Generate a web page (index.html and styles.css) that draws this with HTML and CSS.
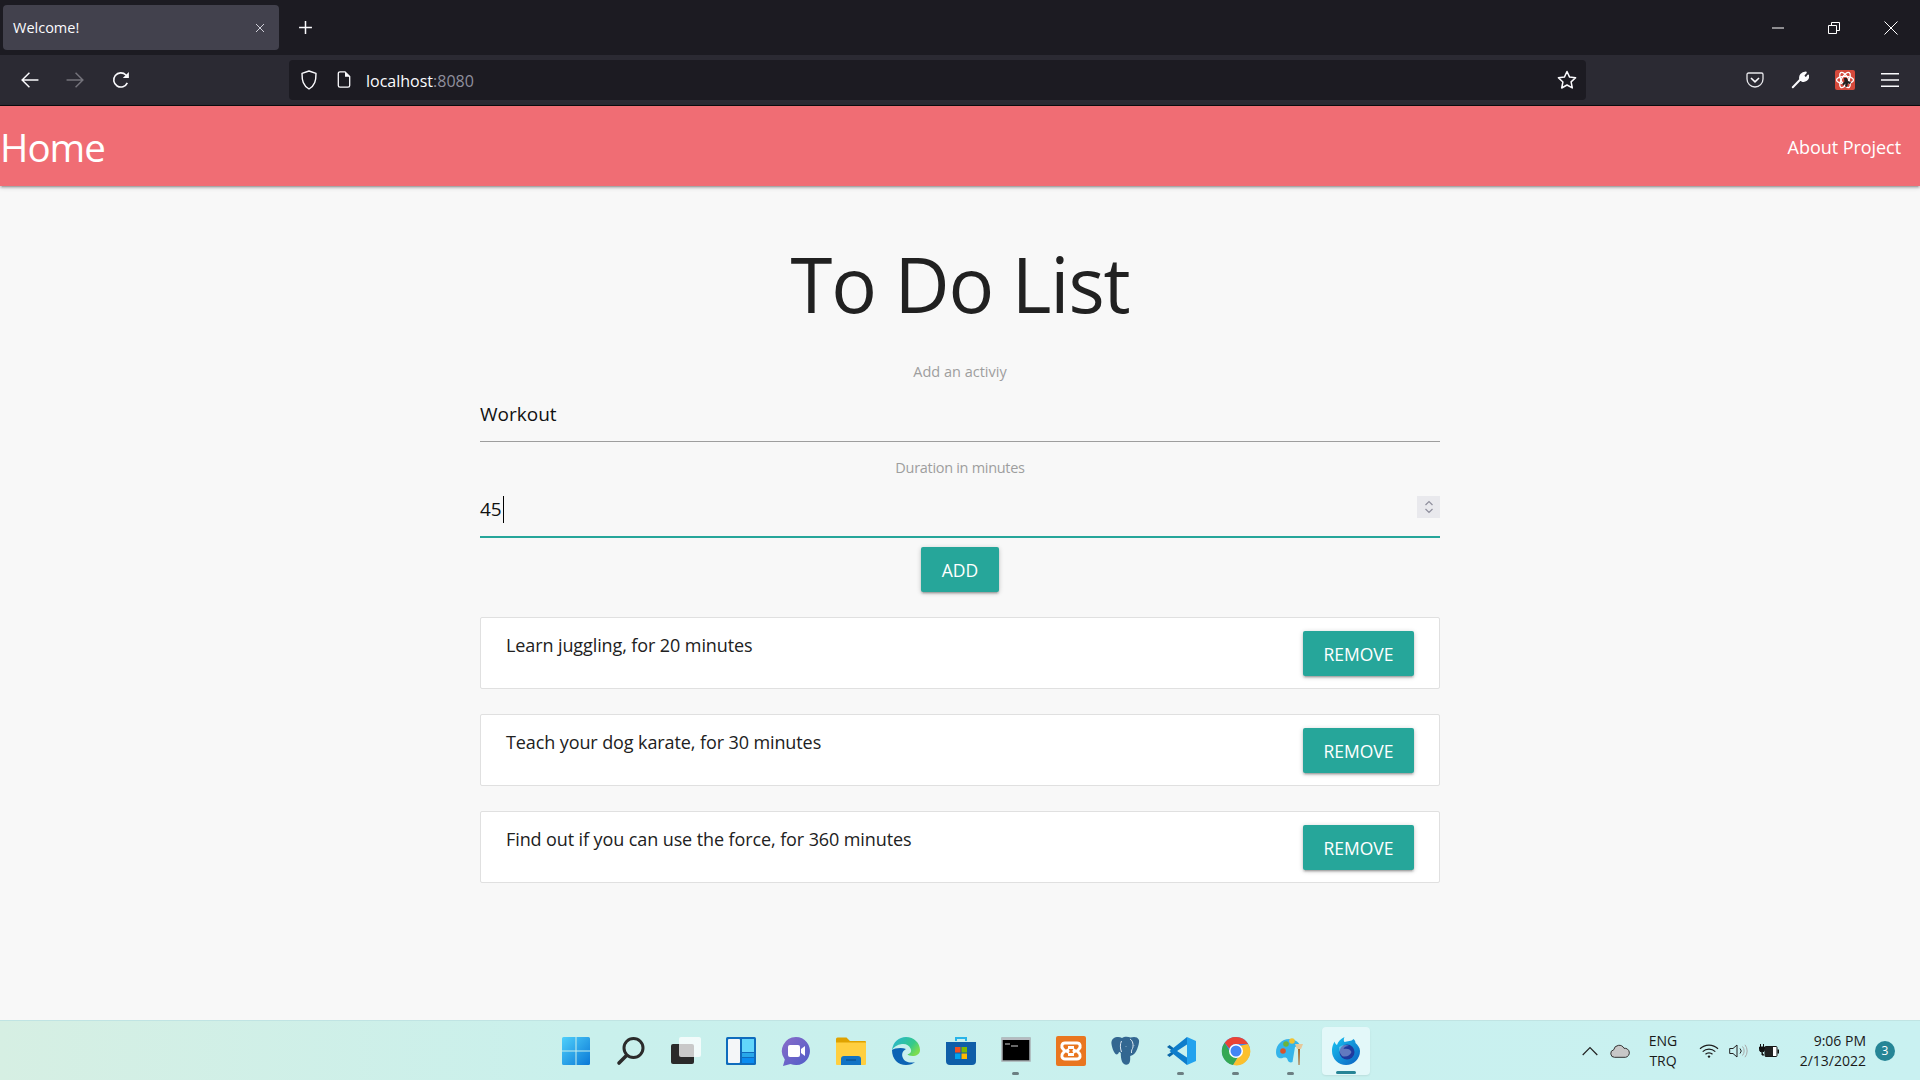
FILE: index.html
```html
<!DOCTYPE html>
<html lang="en">
<head>
<meta charset="utf-8">
<title>Welcome!</title>
<link rel="stylesheet" href="styles.css">
</head>
<body>
<div class="screen">
  <div class="tabstrip">
    <div class="tab">
      <span class="tab-title">Welcome!</span>
      <svg class="tab-close" viewBox="0 0 10 10"><path d="M1 1l8 8M9 1l-8 8" stroke="#cfcfd8" stroke-width="1" fill="none"/></svg>
    </div>
    <svg class="newtab" viewBox="0 0 14 14"><path d="M7 1v12M1 7h12" stroke="#fbfbfe" stroke-width="1.4" fill="none"/></svg>
    <div class="winctl">
      <div class="winbtn"><svg viewBox="0 0 14 14"><path d="M1 7h12" stroke="#fff" stroke-width="1" fill="none"/></svg></div>
      <div class="winbtn"><svg viewBox="0 0 14 14"><path d="M1.5 4.5h8v8h-8zM4.5 4.5v-3h8v8h-3" stroke="#fff" stroke-width="1" fill="none"/></svg></div>
      <div class="winbtn"><svg viewBox="0 0 14 14"><path d="M.5.5l13 13M13.5.5l-13 13" stroke="#fff" stroke-width="1" fill="none"/></svg></div>
    </div>
  </div>

  <div class="toolbar">
    <div class="navbtns">
      <div class="tbtn"><svg viewBox="0 0 16 16"><path d="M15.5 8H1M7.5 1.5L1 8l6.5 6.5" stroke="#fbfbfe" stroke-width="1.3" fill="none"/></svg></div>
      <div class="tbtn"><svg viewBox="0 0 16 16"><path d="M.5 8H15M8.5 1.5L15 8l-6.5 6.5" stroke="#74737b" stroke-width="1.3" fill="none"/></svg></div>
      <div class="tbtn"><svg viewBox="0 0 16 16"><path d="M13.6 10.5A6.3 6.3 0 1 1 12.4 3.6L14 5" stroke="#fbfbfe" stroke-width="1.4" fill="none"/><path d="M15 .8v5.4H9.6z" fill="#fbfbfe"/></svg></div>
    </div>
    <div class="urlbar">
      <svg class="u-shield" viewBox="0 0 16 20"><path d="M8 1L1 3.4c0 7 1 12 7 15.6 6-3.600 7-8.600 7-15.600z" stroke="#fbfbfe" stroke-width="1.4" fill="none" stroke-linejoin="round"/></svg>
      <svg class="u-page" viewBox="0 0 13 17"><path d="M2.500.8h5l4.700 4.700v9a1.700 1.700 0 0 1-1.700 1.700h-8A1.700 1.700 0 0 1 .8 14.500v-12A1.700 1.700 0 0 1 2.500.8z" stroke="#fbfbfe" stroke-width="1.3" fill="none"/><path d="M7.500 1v4.700h4.700z" fill="#fbfbfe"/></svg>
      <span class="u-text">localhost<span class="u-port">:8080</span></span>
      <svg class="u-star" viewBox="0 0 20 20"><path d="M10 1.500l2.600 5.600 6 .7-4.500 4.100 1.200 6L10 15l-5.300 3 1.200-6L1.400 7.800l6-.7z" stroke="#fbfbfe" stroke-width="1.500" fill="none" stroke-linejoin="round"/></svg>
    </div>
    <div class="tools">
      <div class="tool"><svg class="i18" viewBox="0 0 18 16"><path d="M2.500 1h13A1.500 1.500 0 0 1 17 2.500V7a8 8 0 0 1-16 0V2.500A1.500 1.500 0 0 1 2.500 1z" stroke="#e8e8ec" stroke-width="1.300" fill="none"/><path d="M5 6l4 3.800L13 6" stroke="#fbfbfe" stroke-width="1.600" fill="none"/></svg></div>
      <div class="tool"><svg class="i18" viewBox="0 0 18 18"><path d="M1.800 16.200l7.500-7.700M9.300 8.500c-1-3.500 1.500-7 5.500-7l-2.400 2.700.9 2.200 2.200.6L17.200 4.500c.5 4-3.400 6.300-6.400 5z" stroke="#fbfbfe" stroke-width="2" fill="#fbfbfe" stroke-linecap="round" stroke-linejoin="round"/></svg></div>
      <div class="tool"><svg class="i20" viewBox="0 0 20 20"><rect width="20" height="20" rx="2" fill="#d5493b"/><g fill="none" stroke="#fff" stroke-width="1.300"><ellipse cx="10" cy="10" rx="8.500" ry="3.600"/><ellipse cx="10" cy="10" rx="8.500" ry="3.600" transform="rotate(60 10 10)"/><ellipse cx="10" cy="10" rx="8.500" ry="3.600" transform="rotate(120 10 10)"/></g><path d="M9 8h3l1 3 3 1-1 2-2-.5-1 3.500-2-.5.500-3-2 2-1.500-1.500 2.500-2.500z" fill="#222"/></svg></div>
      <div class="tool"><svg class="i18" viewBox="0 0 16 14"><path d="M0 1.500h16M0 7h16M0 12.500h16" stroke="#fbfbfe" stroke-width="1.400" fill="none"/></svg></div>
    </div>
  </div>

  <nav class="appnav">
    <a class="brand">Home</a>
    <a class="navlink">About Project</a>
  </nav>

  <main class="content">
    <h1 class="title">To Do List</h1>
    <form class="form">
      <label class="label">Add an activiy</label>
      <div class="field">Workout</div>
      <label class="label label-second">Duration in minutes</label>
      <div class="field field-focus">
        <span class="value">45</span><span class="caret"></span>
        <span class="spinner">
          <svg viewBox="0 0 10 16"><path d="M1.500 6L5 2.500 8.500 6M1.500 10L5 13.500 8.500 10" stroke="#8f8f9d" stroke-width="1.200" fill="none"/></svg>
        </span>
      </div>
      <button class="btn btn-add" type="button">ADD</button>
    </form>
    <ul class="list">
      <li class="card"><span>Learn juggling, for 20 minutes</span><button class="btn" type="button">REMOVE</button></li>
      <li class="card"><span>Teach your dog karate, for 30 minutes</span><button class="btn" type="button">REMOVE</button></li>
      <li class="card"><span>Find out if you can use the force, for 360 minutes</span><button class="btn" type="button">REMOVE</button></li>
    </ul>
  </main>

  <footer class="taskbar">
    <div class="apps">
      <div class="app"><svg class="ti" viewBox="0 0 30 30"><defs><linearGradient id="w" x1="0" y1="0" x2="1" y2="1"><stop offset="0" stop-color="#4fd0fb"/><stop offset="1" stop-color="#0a78d6"/></linearGradient></defs><path d="M1 2.500A1.500 1.500 0 0 1 2.500 1h12v13.500H1zM15.500 1h12A1.500 1.500 0 0 1 29 2.500v12H15.500zM1 15.500h13.500V29h-12A1.500 1.500 0 0 1 1 27.500zM15.500 15.500H29v12a1.500 1.500 0 0 1-1.500 1.500h-12z" fill="url(#w)"/></svg></div>
      <div class="app"><svg class="ti" viewBox="0 0 30 30"><circle cx="17.500" cy="12" r="9.500" fill="none" stroke="#2b2b2b" stroke-width="3"/><path d="M10.500 19.500L3 27" stroke="#2b2b2b" stroke-width="3.600" stroke-linecap="round"/></svg></div>
      <div class="app"><svg class="ti" viewBox="0 0 30 30"><rect x="0" y="8" width="23" height="20" rx="2" fill="#2a2a2a"/><rect x="8" y="1" width="22" height="20" rx="2" fill="#fff" opacity=".75"/></svg></div>
      <div class="app"><svg class="ti" viewBox="0 0 30 30"><rect y="1" width="30" height="28" rx="1.500" fill="#0f6cbd"/><rect x="2" y="3" width="12" height="24" rx="1" fill="#f4f6f8"/><rect x="16" y="3" width="12" height="13" fill="#62d6fb"/><rect x="16" y="17" width="12" height="4" fill="#28a8ea"/><rect x="16" y="22" width="12" height="5" fill="#0a8cf0"/></svg></div>
      <div class="app"><svg class="ti" viewBox="0 0 30 30"><defs><linearGradient id="c" x1="0" y1="0" x2="1" y2="1"><stop offset="0" stop-color="#8a6dc9"/><stop offset="1" stop-color="#4f5cc8"/></linearGradient></defs><path d="M15 1a14 14 0 1 1-5.500 26.900L2 30l1.800-6.500A14 14 0 0 1 15 1z" fill="url(#c)"/><rect x="7" y="9" width="12" height="12" rx="2" fill="#fff"/><path d="M20 13l4-3v10l-4-3z" fill="#fff"/></svg></div>
      <div class="app"><svg class="ti" viewBox="0 0 30 30"><path d="M0 3a1.500 1.500 0 0 1 1.500-1.500h9L14 5h15a1 1 0 0 1 1 1v3H0z" fill="#dfa200"/><path d="M0 6.500h30V28a1 1 0 0 1-1 1H1a1 1 0 0 1-1-1z" fill="#ffcf40"/><path d="M5 23a3 3 0 0 1 3-3h14a3 3 0 0 1 3 3v6H5z" fill="#1273c4"/><path d="M10 24h10" stroke="#0a4e8c" stroke-width="1.200"/></svg></div>
      <div class="app"><svg class="ti" viewBox="0 0 30 30"><defs><linearGradient id="e1" x1="0" y1="0" x2="1" y2=".6"><stop offset="0" stop-color="#28b4d8"/><stop offset=".7" stop-color="#35c98a"/><stop offset="1" stop-color="#7bdc50"/></linearGradient></defs><path d="M1 14C2 6 8 1 15 1c8 0 14 6 14 13 0 4-3.500 6-7.500 6-2.500 0-4.500-.6-5-1.700 3-.5 4.500-2.800 3-5.800C18 9 15 7.500 11 8 6 8.800 2.500 11 1 14z" fill="url(#e1)"/><path d="M1 14c0 9 6 15 14 15 4 0 7-1.200 9-3-5 1.500-11 0-12.500-5-1-3.500.5-6.500 3.500-8-5-2-12-.5-14 1z" fill="#0c63b4"/></svg></div>
      <div class="app"><svg class="ti" viewBox="0 0 30 30"><path d="M10 5V2h10v3" stroke="#28b4e8" stroke-width="2" fill="none"/><path d="M0 6h30v19a4 4 0 0 1-4 4H4a4 4 0 0 1-4-4z" fill="#0f5ea8"/><rect x="9" y="11" width="5.500" height="5.500" fill="#f25022"/><rect x="15.500" y="11" width="5.500" height="5.500" fill="#7fba00"/><rect x="9" y="17.500" width="5.500" height="5.500" fill="#00a4ef"/><rect x="15.500" y="17.500" width="5.500" height="5.500" fill="#ffb900"/></svg></div>
      <div class="app app-open"><svg class="ti" viewBox="0 0 30 30"><rect x="1" y="2" width="28" height="23" fill="#000" stroke="#a9afb3" stroke-width="1.500"/><rect x="1" y="2" width="28" height="2" fill="#b5bbc0"/><path d="M4 8h5M10 10h7" stroke="#cfcfcf" stroke-width="1.200"/></svg></div>
      <div class="app"><svg class="ti" viewBox="0 0 30 30"><rect width="30" height="30" rx="2" fill="#e9761f"/><path d="M9 7h12c3.500 0 4 4 2 6l-2 2 2 2c2 2 1.500 6-2 6H9c-3.500 0-4-4-2-6l2-2-2-2c-2-2-1.500-6 2-6zM12 11.500h6M12 18.500h6M11 13l1 2-1 2M19 13l-1 2 1 2" fill="none" stroke="#fff" stroke-width="3"/></svg></div>
      <div class="app"><svg class="ti" viewBox="0 0 30 30"><path d="M6 1c-4 .3-6 3.500-5.500 7 .4 3 2 8 4 10 1.500 1.300 3-.3 3.500-2 .7 0 1.300.5 1.800 1 0 3 .2 6 1.200 8.500 1 3 4.300 4 6.500 2.500 2-1.500 1.700-5 1.700-8 4-1 5.500-3.500 7-7 1.500-4 2.500-8 1.500-9.500C26.500 .5 22.500 .5 19.500 1.500 17 .5 13 .5 11 2 9.500 1 7.800 .8 6 1z" fill="#336791"/><path d="M10.500 5c-1.500 3-1.500 7 0 11M19 3c2 1 3.500 4 3 8-.3 2-2 3-1.500 6M15 10v.5M23 9v.5" stroke="#dbe6ee" stroke-width="1" fill="none"/></svg></div>
      <div class="app app-open"><svg class="ti" viewBox="0 0 30 30"><path d="M3.500 9L1 11l6 4-6 4 2.500 2 8-6z" fill="#0a66a8"/><path d="M21 8.500L11 15l10 6.500V29L6 17l-2.500-2L6 13 21 1z" fill="#0e7dcb"/><path d="M21 1l9 4v20l-9 4z" fill="#22a2ee"/></svg></div>
      <div class="app app-open"><svg class="ti" viewBox="0 0 30 30"><circle cx="15" cy="15" r="14" fill="#4285f4"/><path d="M15 1a14 14 0 0 1 12.100 7H15a7 7 0 0 0-6.600 4.600L3.700 6.700A14 14 0 0 1 15 1z" fill="#ea4335"/><path d="M3.700 6.700l6 10.300a6.500 6.500 0 0 0 6.900 4.500L12 29A14 14 0 0 1 3.700 6.700z" fill="#34a853"/><path d="M27.100 8a14 14 0 0 1-15 21l5-8.300c2-1 4-3.700 3-7.200-.2-1-1-2.500-2-3.500z" fill="#fbc02d"/><circle cx="15" cy="15" r="7" fill="#fff"/><circle cx="15" cy="15" r="5.500" fill="#4285f4"/></svg></div>
      <div class="app app-open"><svg class="ti" viewBox="0 0 30 30"><path d="M13 3C6 3 0 9 0 16c0 6 4 7 6.500 6 2.500-1 4.500-.5 5 1.500.5 2.500 3 3.500 5 2.500L19 11l5-2c-2-3.500-6-6-11-6z" fill="#35b4ea"/><circle cx="7" cy="15" r="2.800" fill="#d9532c"/><circle cx="10" cy="8" r="2.800" fill="#6bb33c"/><circle cx="16" cy="5" r="2.800" fill="#f2c230"/><path d="M19 8l8 0-2 5h-4z" fill="#e7c89a"/><path d="M22 13h2l-.5 16h-1z" fill="#a3662a"/></svg></div>
    </div>
    <div class="active-app"><svg class="ti" viewBox="0 0 30 30"><defs><linearGradient id="f" x1="0" y1="0" x2="1" y2="1"><stop offset="0" stop-color="#19c6f2"/><stop offset="1" stop-color="#0b5fc0"/></linearGradient></defs><path d="M15 29A14 14 0 0 1 1 15C1 10 2.500 8 3.500 5.500 4 7.500 5 8.500 6 9c1-3.500 4-6.500 7.500-8-1 2-1 4 0 5 3-1 7-.5 9-3 1.500 1 2 3 2 4 2 2 4.500 4.500 4.500 8A14 14 0 0 1 15 29z" fill="url(#f)"/><circle cx="16" cy="16" r="7.500" fill="#1f3a9e"/><path d="M8 11c3-2 7-3 10-1-3 0-5 1-5.500 3 3.500-1 7 0 8 3-1 3-4 5-8 4.500C10 20 8 16 8 11z" fill="#dff1fb" opacity=".35"/></svg><span class="active-bar"></span></div>
    <div class="tray">
      <svg class="t-chev" viewBox="0 0 16 10"><path d="M.7 9L8 1.500 15.300 9" stroke="#222" stroke-width="1.200" fill="none"/></svg>
      <svg class="t-cloud" viewBox="0 0 20 14"><path d="M4.500 13.300A3.800 3.800 0 0 1 3.700 5.800 5.500 5.500 0 0 1 14 4.300a4.500 4.500 0 0 1 1.500 9z" fill="#c7c7c7" stroke="#333" stroke-width="1"/></svg>
      <div class="lang"><span>ENG</span><span>TRQ</span></div>
      <svg class="t-wifi" viewBox="0 0 20 14"><path d="M1 4.800a12.800 12.800 0 0 1 18 0M3.700 7.600a9 9 0 0 1 12.600 0M6.500 10.300a5 5 0 0 1 7 0" stroke="#1d1d1d" stroke-width="1.200" fill="none"/><circle cx="10" cy="12.600" r="1.200" fill="#1d1d1d"/></svg>
      <svg class="t-vol" viewBox="0 0 20 14"><path d="M.7 4.500h3.300L8 1v12L4 9.500H.7z" stroke="#222" stroke-width="1" fill="none"/><path d="M11 4.500a3.500 3.500 0 0 1 0 5" stroke="#222" stroke-width="1" fill="none"/><path d="M13.500 2.500a7 7 0 0 1 0 9M16 .8a10 10 0 0 1 0 12.400" stroke="#a8a8a8" stroke-width="1" fill="none"/></svg>
      <svg class="t-batt" viewBox="0 0 20 14"><path d="M1.500 0v3M4.500 0v3M.5 3h5v2.500a2.500 2.500 0 0 1-5 0zM3 8v3h2" stroke="#111" stroke-width="1" fill="#111"/><rect x="6" y="2.500" width="12" height="10" rx="1" fill="#fff" stroke="#111" stroke-width="1"/><rect x="6" y="2.500" width="8" height="10" fill="#222"/><rect x="18.500" y="5.500" width="1.500" height="4" fill="#111"/></svg>
      <div class="clock"><span>9:06 PM</span><span>2/13/2022</span></div>
      <div class="badge">3</div>
    </div>
  </footer>
</div>
</body>
</html>
```

FILE: styles.css
```css
* { box-sizing: border-box; }
html, body { margin: 0; padding: 0; background: #fff; }
body { font-family: "Open Sans", "Noto Sans", sans-serif; }
svg { display: block; flex: none; }

.screen { width: 1920px; height: 1080px; display: flex; flex-direction: column; overflow: hidden; background: #f8f8f8; }

/* tab strip */
.tabstrip { height: 55px; background: #1c1b22; display: flex; align-items: center; padding-left: 3px; flex: none; }
.tab { width: 276px; height: 45px; background: #42414d; border-radius: 4px; display: flex; align-items: center; justify-content: space-between; padding: 0 14px 0 10px; }
.tab-title { color: #fbfbfe; font-size: 14.500px; }
.tab-close { width: 10px; height: 10px; }
.newtab { width: 15px; height: 15px; margin-left: 19px; }
.winctl { margin-left: auto; display: flex; margin-right: 1px; }
.winbtn { width: 56.500px; height: 55px; display: flex; align-items: center; justify-content: center; }
.winbtn svg { width: 14px; height: 14px; }

/* toolbar */
.toolbar { height: 51px; background: #2b2a33; border-bottom: 1px solid #0c0c0f; display: flex; align-items: center; padding: 0 0 1px 7px; flex: none; }
.navbtns { display: flex; width: 136.500px; flex: none; }
.tbtn { width: 45.500px; height: 40px; display: flex; align-items: center; justify-content: center; }
.tbtn svg { width: 18px; height: 18px; }
.urlbar { margin-left: 145.500px; width: 1297px; height: 40px; background: #1c1b22; border-radius: 4px; display: flex; align-items: center; padding: 0 9px 0 11px; flex: none; }
.u-shield { width: 18px; height: 20px; }
.u-page { width: 14px; height: 17px; margin-left: 19px; }
.u-text { margin-left: 15px; color: #fbfbfe; font-size: 16px; position: relative; top: 1px; }
.u-port { color: #8f8f9d; }
.u-star { width: 20px; height: 20px; margin-left: auto; }
.tools { display: flex; margin-left: 146px; }
.tool { width: 45px; height: 40px; display: flex; align-items: center; justify-content: center; }
.i18 { width: 18px; height: 18px; }
.i20 { width: 20px; height: 20px; }

/* app nav */
.appnav { height: 80px; background: #f06d74; display: flex; align-items: center; justify-content: space-between; padding: 2px 19px 0 0; color: #fff; flex: none; position: relative; box-shadow: 0 2px 2px 0 rgba(0,0,0,.14), 0 3px 1px -2px rgba(0,0,0,.12), 0 1px 5px 0 rgba(0,0,0,.2); }
.brand { font-size: 38.500px; font-weight: 400; letter-spacing: -1px; }
.navlink { font-size: 18px; letter-spacing: -.05px; }

/* content */
.content { flex: 1; display: flex; flex-direction: column; align-items: center; min-height: 0; }
.title { margin: 47px 0 0; font-size: 76px; line-height: 102px; font-weight: 400; letter-spacing: -1.100px; color: #212121; }
.form { width: 960px; margin-top: 27px; display: flex; flex-direction: column; align-items: stretch; }
.label { text-align: center; font-size: 14.500px; line-height: 20px; color: #9e9e9e; }
.label-second { margin-top: 16px; letter-spacing: -.3px; }
.field { height: 60px; display: flex; align-items: center; font-size: 19px; color: #111; border-bottom: 1px solid #9e9e9e; padding-top: 4px; }
.field-focus { border-bottom: 2px solid #26a69a; height: 60px; padding-top: 4px; }
.caret { width: 1px; height: 27px; background: #000; margin-left: 1px; }
.spinner { margin-left: auto; width: 23px; height: 22px; background: #e9e9ed; display: flex; align-items: center; justify-content: center; margin-bottom: 4px; }
.spinner svg { width: 10px; height: 16px; }
.btn { height: 45px; padding: 0 20px; border: 0; border-radius: 2px; background: #26a69a; color: #fff; font-family: inherit; font-size: 17.500px; box-shadow: 0 2px 2px 0 rgba(0,0,0,.14), 0 3px 1px -2px rgba(0,0,0,.12), 0 1px 5px 0 rgba(0,0,0,.2); }
.btn-add { align-self: center; margin-top: 9px; width: 78px; padding: 0; }
.list { list-style: none; margin: 25px 0 0; padding: 0; width: 960px; display: flex; flex-direction: column; gap: 25px; }
.card { height: 72px; background: #fff; border: 1px solid #e0e0e0; border-radius: 2px; display: flex; justify-content: space-between; align-items: flex-start; padding: 13px 25px 0 25px; font-size: 18px; color: #212121; line-height: 27px; letter-spacing: -.1px; }
.card span { margin-top: 1px; }
.card .btn { width: 111px; padding: 0; flex: none; letter-spacing: 0; }

/* taskbar */
.taskbar { height: 60px; flex: none; background: linear-gradient(90deg, #d6efe3 0%, #c9f0ec 30%, #c9f1f1 100%); border-top: 1px solid #c0e4e3; display: flex; align-items: center; padding-left: 548px; color: #1a1a1a; }
.apps { display: flex; }
.app { width: 55px; height: 59px; display: flex; align-items: center; justify-content: center; position: relative; }
.app-open::after { content: ""; position: absolute; left: 24px; bottom: 5px; width: 7px; height: 3px; border-radius: 2px; background: #6c7f82; }
.ti { width: 30px; height: 30px; }
.active-app { width: 48px; height: 48px; margin-left: 4px; background: #e3f8f9; border-radius: 4px; display: flex; align-items: center; justify-content: center; position: relative; box-shadow: 0 1px 2px rgba(0,0,0,.08); }
.active-bar { position: absolute; left: 14px; bottom: 1px; width: 20px; height: 3px; border-radius: 2px; background: #268596; }
.tray { margin-left: auto; display: flex; align-items: center; padding-right: 25px; }
.t-chev { width: 16px; height: 10px; }
.t-cloud { width: 20px; height: 14px; margin-left: 12px; }
.lang { display: flex; flex-direction: column; align-items: center; margin-left: 18px; font-size: 14px; line-height: 20px; width: 30px; }
.t-wifi { width: 20px; height: 14px; margin-left: 21px; }
.t-vol { width: 20px; height: 14px; margin-left: 10px; }
.t-batt { width: 20px; height: 14px; margin-left: 10px; }
.clock { display: flex; flex-direction: column; align-items: flex-end; margin-left: 9px; font-size: 14px; line-height: 20px; width: 78px; }
.badge { width: 20px; height: 20px; border-radius: 50%; background: #268596; color: #fff; font-size: 12px; line-height: 20px; text-align: center; margin-left: 9px; }
```
